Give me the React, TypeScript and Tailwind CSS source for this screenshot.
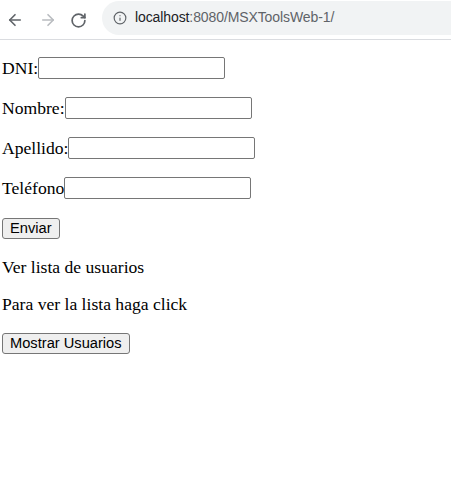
import React from "react";
import { ArrowLeft, ArrowRight, RotateCw, Info } from "lucide-react";

const fields = ["DNI:", "Nombre:", "Apellido:", "Teléfono"];

const App = () => {
  return (
    <div className="min-h-screen bg-white">
      {/* Barra del navegador */}
      <header className="h-[40px] border-b border-[#dadce0] flex items-center bg-white">
        <div className="flex items-center pt-[1px]">
          <ArrowLeft className="ml-[6px] w-[18px] h-[18px] text-[#5f6368]" strokeWidth={2.2} />
          <ArrowRight className="ml-[15px] w-[18px] h-[18px] text-[#b9bcc0]" strokeWidth={2.2} />
          <RotateCw className="ml-[13px] w-[17px] h-[17px] text-[#5f6368]" strokeWidth={2.4} />
        </div>
        <div className="ml-[15px] mt-[-4px] flex-1 h-[34px] rounded-l-full bg-[#f1f3f4] flex items-center">
          <Info className="ml-[11px] w-[14px] h-[14px] text-[#5f6368]" strokeWidth={2} />
          <span className="ml-[8px] text-[14px] tracking-[-0.1px] font-['Liberation_Sans',Arial,sans-serif] text-[#202124]">
            localhost<span className="text-[#5f6368]">:8080/MSXToolsWeb-1/</span>
          </span>
        </div>
      </header>

      {/* Contenido */}
      <div className="pl-[2px] font-['Liberation_Serif','Times_New_Roman',serif] text-[17.6px] text-black">
        {fields.map((f) => (
          <div key={f} className="mt-[16px] h-[24px] flex items-center">
            <span>{f}</span>
            <input
              type="text"
              className="w-[187px] h-[22px] border border-[#767676] rounded-[2px] bg-white px-[2px]"
            />
          </div>
        ))}

        <div className="mt-[16px] h-[24px] flex items-center">
          <button className="h-[21px] px-[7px] border border-[#767676] rounded-[3px] bg-[#efefef] font-['Liberation_Sans',Arial,sans-serif] text-[14.67px] leading-none">
            Enviar
          </button>
        </div>

        <p className="mt-[17px] leading-[20px]">Ver lista de usuarios</p>
        <p className="mt-[17px] leading-[20px]">Para ver la lista haga click</p>

        <div className="mt-[17px] h-[24px] flex items-center">
          <button className="h-[21px] px-[7px] border border-[#767676] rounded-[3px] bg-[#efefef] font-['Liberation_Sans',Arial,sans-serif] text-[14.67px] leading-none">
            Mostrar Usuarios
          </button>
        </div>
      </div>
    </div>
  );
};

export default App;
